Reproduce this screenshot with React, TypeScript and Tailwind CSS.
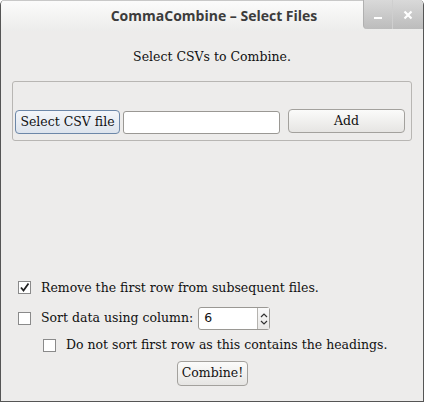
import React from "react";

const serif = { fontFamily: '"DejaVu Serif", "Liberation Serif", serif' };

function Check({ checked }: { checked?: boolean }) {
  return (
    <div className="w-[13px] h-[13px] border border-[#8a8a8a] bg-white flex items-center justify-center shrink-0">
      {checked && (
        <svg width="11" height="11" viewBox="0 0 11 11">
          <path d="M2 5.5 L4.5 8.5 L9.5 1.5" stroke="#222" strokeWidth="1.8" fill="none" />
        </svg>
      )}
    </div>
  );
}

export default function App() {
  return (
    <div className="w-[424px] h-[402px] bg-[#edeceb] flex flex-col border-l border-b border-r border-[#555] rounded-t-[5px] overflow-hidden text-[#111]" style={serif}>
      <div className="h-[31px] shrink-0 bg-gradient-to-b from-[#fbfbfb] to-[#ececeb] flex items-stretch relative border-t border-[#c8c8c8]">
        <div className="flex-1 flex items-center justify-center pl-[64px] pb-[2px] text-[14px] font-bold text-[#3c3c3c]" style={{ fontFamily: '"Open Sans", "DejaVu Sans", sans-serif' }}>
          CommaCombine – Select Files
        </div>
        <div className="flex h-[29px] -mt-px">
          <div className="w-[29px] bg-gradient-to-b from-[#d9d9d9] to-[#bcbcbc] border-l border-[#b0b0b0] rounded-bl-[4px] flex items-end justify-center pb-[10px]">
            <div className="w-[8px] h-[2px] bg-white" />
          </div>
          <div className="w-[31px] bg-gradient-to-b from-[#d9d9d9] to-[#bcbcbc] border-l border-[#cfcfcf] flex items-center justify-center">
            <svg width="10" height="10" viewBox="0 0 10 10">
              <path d="M1.5 1.5 L8.5 8.5 M8.5 1.5 L1.5 8.5" stroke="#fff" strokeWidth="2.2" />
            </svg>
          </div>
        </div>
      </div>
      <div className="flex-1 flex flex-col px-[11px] text-[12.5px]">
        <div className="text-center mt-[18px] leading-[16px]">Select CSVs to Combine.</div>
        <div className="mt-[16px] h-[60px] border border-[#b8b6b3] rounded-[3px] flex items-end px-[2px] pb-[6px]">
          <div className="flex items-center w-full">
            <div className="w-[105px] h-[24px] border border-[#6c87a8] rounded-[4px] bg-gradient-to-b from-[#f3f6fa] to-[#dde4ed] flex items-center justify-center">
              Select CSV file
            </div>
            <div className="ml-[3px] w-[157px] h-[23px] border border-[#9a9894] rounded-[3px] bg-white" />
            <div className="ml-[8px] w-[117px] h-[24px] border border-[#a3a19d] rounded-[4px] bg-gradient-to-b from-[#fbfbfa] to-[#e6e5e3] flex items-center justify-center -mt-[2px]">
              Add
            </div>
          </div>
        </div>
        <div className="flex-1" />
        <div className="flex items-center gap-[10px] pl-[6px]">
          <Check checked />
          <span>Remove the first row from subsequent files.</span>
        </div>
        <div className="flex items-center pl-[6px] mt-[10px]">
          <Check />
          <span className="ml-[10px]">Sort data using column:</span>
          <div className="ml-[5px] w-[72px] h-[23px] border border-[#9a9894] rounded-[3px] bg-white flex items-stretch">
            <span className="flex-1 pl-[5px] flex items-center" style={{ fontFamily: '"DejaVu Sans", sans-serif' }}>6</span>
            <div className="w-[12px] border-l border-[#b5b3af] flex flex-col items-center justify-center bg-gradient-to-b from-[#fafafa] to-[#e9e8e6]">
              <svg width="8" height="16" viewBox="0 0 8 16">
                <path d="M1 6 L4 3 L7 6" stroke="#333" strokeWidth="1.2" fill="none" />
                <path d="M1 10 L4 13 L7 10" stroke="#333" strokeWidth="1.2" fill="none" />
              </svg>
            </div>
          </div>
        </div>
        <div className="flex items-center gap-[10px] pl-[31px] mt-[6px]">
          <Check />
          <span>Do not sort first row as this contains the headings.</span>
        </div>
        <div className="flex justify-center mt-[6px] mb-[15px]">
          <div className="w-[71px] h-[25px] border border-[#a3a19d] rounded-[4px] bg-gradient-to-b from-[#fbfbfa] to-[#e6e5e3] flex items-center justify-center ml-[1px]">
            Combine!
          </div>
        </div>
      </div>
    </div>
  );
}
